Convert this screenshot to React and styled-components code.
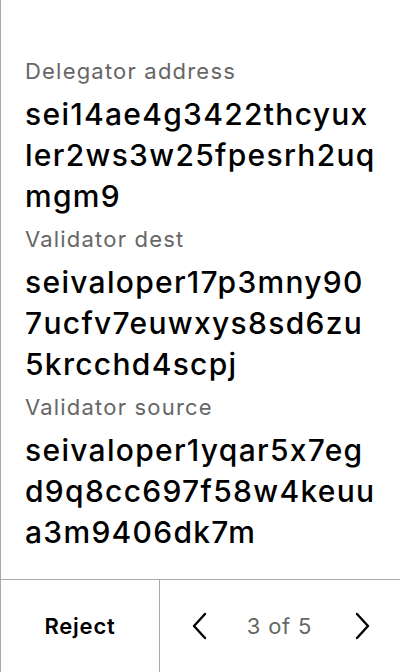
import React from "react";
import styled, { createGlobalStyle } from "styled-components";

const Global = createGlobalStyle`
  html, body { margin: 0; padding: 0; background: #fff; }
  body {
    font-family: Inter, "Noto Sans", sans-serif;
    font-feature-settings: "calt" 0;
  }
`;

const Screen = styled.div`
  display: flex;
  flex-direction: column;
  height: 672px;
  border-left: 1px solid #a8a8a8;
  box-sizing: border-box;
`;

const Body = styled.div`
  flex: 1;
  padding: 49px 20px 0 24px;
`;

const Label = styled.div`
  font-size: 22px;
  line-height: 45px;
  letter-spacing: 1.2px;
  color: #666;
`;

const Value = styled.div`
  font-size: 30px;
  font-weight: 500;
  line-height: 41px;
  letter-spacing: 1.3px;
  color: #000;
`;

const ValueLine = styled.span`
  display: block;
  white-space: nowrap;
`;

const Footer = styled.div`
  display: flex;
  height: 92px;
  border-top: 1px solid #a8a8a8;
`;

const RejectButton = styled.button`
  width: 159px;
  border: 0;
  border-right: 1px solid #a8a8a8;
  background: none;
  font-family: Inter, sans-serif;
  font-size: 22px;
  font-weight: 600;
  letter-spacing: 0.8px;
  color: #000;
  padding: 0;
`;

const Pager = styled.div`
  flex: 1;
  display: flex;
  align-items: center;
  justify-content: space-between;
  padding: 0 29px 0 31px;
`;

const PageText = styled.span`
  font-size: 22px;
  letter-spacing: 0.8px;
  color: #666;
  margin-right: 3px;
`;

const Chevron = ({ dir }) => (
  <svg width="16" height="28" viewBox="0 0 16 28" fill="none">
    <path
      d={dir === "left" ? "M14 2 L3 14 L14 26" : "M2 2 L13 14 L2 26"}
      stroke="#000"
      strokeWidth="2.4"
      strokeLinecap="round"
      strokeLinejoin="round"
    />
  </svg>
);

const fields = [
  { label: "Delegator address", lines: ["sei14ae4g3422thcyux", "ler2ws3w25fpesrh2uq", "mgm9"] },
  { label: "Validator dest", lines: ["seivaloper17p3mny90", "7ucfv7euwxys8sd6zu", "5krcchd4scpj"] },
  { label: "Validator source", lines: ["seivaloper1yqar5x7eg", "d9q8cc697f58w4keuu", "a3m9406dk7m"] },
];

const App = () => (
  <>
    <Global />
    <Screen>
      <Body>
        {fields.map((f) => (
          <div key={f.label}>
            <Label>{f.label}</Label>
            <Value>
              {f.lines.map((l) => (
                <ValueLine key={l}>{l}</ValueLine>
              ))}
            </Value>
          </div>
        ))}
      </Body>
      <Footer>
        <RejectButton>Reject</RejectButton>
        <Pager>
          <Chevron dir="left" />
          <PageText>3 of 5</PageText>
          <Chevron dir="right" />
        </Pager>
      </Footer>
    </Screen>
  </>
);

export default App;
